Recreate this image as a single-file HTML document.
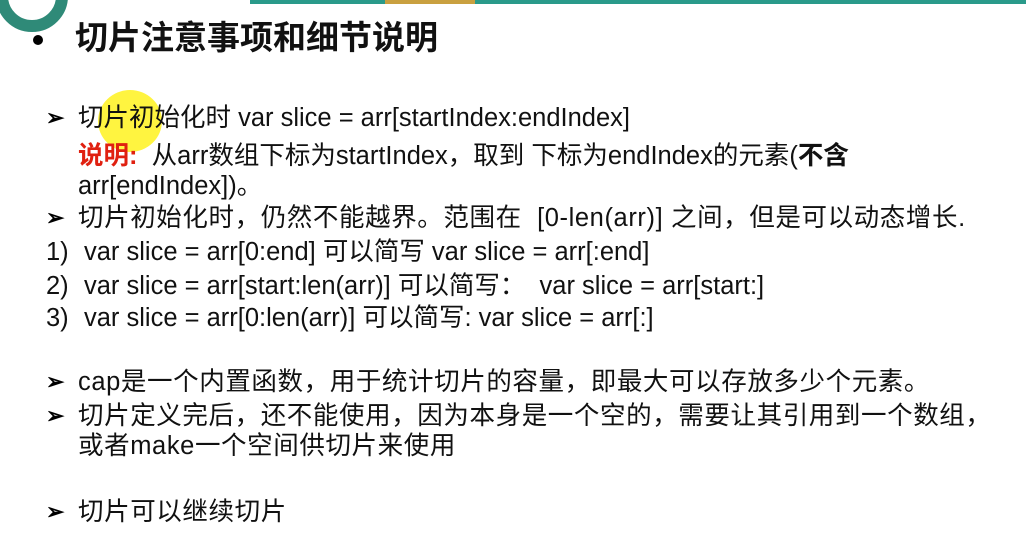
<!DOCTYPE html>
<html><head><meta charset="utf-8"><style>
body{margin:0;width:1026px;height:546px;background:#fff;overflow:hidden;position:relative;font-family:"Liberation Sans","Noto Sans CJK SC",sans-serif;color:#111}
.l{position:absolute;font-size:25.5px;white-space:nowrap;line-height:28px}
.c{letter-spacing:0.6px}
.ar{font-size:22px;font-weight:bold;color:#000}
</style></head><body>
<div style="position:absolute;left:250px;top:0;width:776px;height:4px;background:#2a9a8a"></div>
<div style="position:absolute;left:385px;top:0;width:90px;height:4px;background:#c9a040"></div>
<div style="position:absolute;left:-4px;top:-40px;width:48px;height:48px;border:12px solid #2f8a78;border-radius:50%"></div>
<div style="position:absolute;left:33px;top:35px;width:10px;height:10px;background:#000;border-radius:50%"></div>
<div class="l" style="left:75px;top:19px;font-size:33px;font-weight:bold;line-height:38px">切片注意事项和细节说明</div>
<div style="position:absolute;left:98px;top:90px;width:64px;height:62px;border-radius:50%;background:rgba(255,240,0,.75)"></div>
<div class="l ar" style="left:46px;top:104px">➢</div>
<div class="l" style="left:78px;top:104px">切片初始化时 var slice = arr[startIndex:endIndex]</div>
<div class="l" style="left:78px;top:142px"><b style="color:#e02010">说明:</b>&nbsp; 从arr数组下标为startIndex，取到 下标为endIndex的元素(<b>不含</b></div>
<div class="l" style="left:78px;top:172px">arr[endIndex])。</div>
<div class="l ar" style="left:46px;top:204px">➢</div>
<div class="l c" style="left:78px;top:204px">切片初始化时，仍然不能越界。范围在 &nbsp;[0-len(arr)] 之间，但是可以动态增长.</div>
<div class="l" style="left:46px;top:238px">1)</div><div class="l" style="left:84px;top:238px">var slice = arr[0:end] 可以简写 var slice = arr[:end]</div>
<div class="l" style="left:46px;top:272px">2)</div><div class="l" style="left:84px;top:272px">var slice = arr[start:len(arr)] 可以简写： &nbsp;var slice = arr[start:]</div>
<div class="l" style="left:46px;top:304px">3)</div><div class="l" style="left:84px;top:304px">var slice = arr[0:len(arr)] 可以简写: var slice = arr[:]</div>
<div class="l ar" style="left:46px;top:368px">➢</div>
<div class="l c" style="left:78px;top:368px">cap是一个内置函数，用于统计切片的容量，即最大可以存放多少个元素。</div>
<div class="l ar" style="left:46px;top:402px">➢</div>
<div class="l c" style="left:78px;top:402px">切片定义完后，还不能使用，因为本身是一个空的，需要让其引用到一个数组，</div>
<div class="l c" style="left:78px;top:432px">或者make一个空间供切片来使用</div>
<div class="l ar" style="left:46px;top:498px">➢</div>
<div class="l c" style="left:78px;top:498px">切片可以继续切片</div>
</body></html>
